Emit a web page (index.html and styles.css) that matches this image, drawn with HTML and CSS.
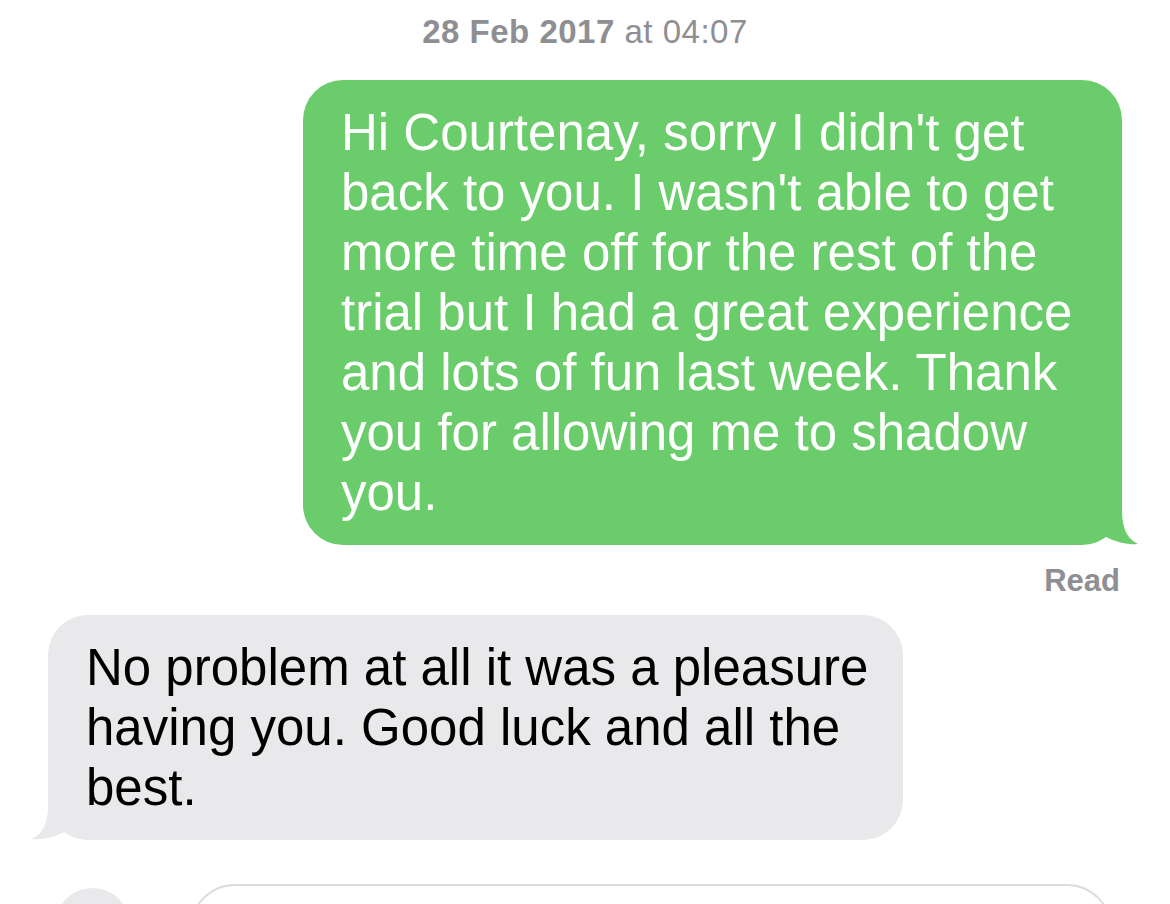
FILE: index.html
```html
<!DOCTYPE html>
<html lang="en">
<head>
    <meta charset="UTF-8">
    <meta name="viewport" content="width=device-width, initial-scale=1.0">
    <title>Messages</title>
    <link rel="stylesheet" href="styles.css">
</head>
<body>
    <div class="date"><span class="day">28 Feb 2017</span> at 04:07</div>
    <div class="thread">
        <div class="bubble sent">
            Hi Courtenay, sorry I didn't get<br>
            back to you. I wasn't able to get<br>
            more time off for the rest of the<br>
            trial but I had a great experience<br>
            and lots of fun last week. Thank<br>
            you for allowing me to shadow<br>
            you.
            <svg class="tail" viewBox="0 0 48 45" width="48" height="45">
                <path d="M0 0 H30 V10 C30 28 35 39 46 44 C38 45 26 43 14 37 Z"/>
            </svg>
        </div>
        <div class="read">Read</div>
        <div class="bubble received">
            No problem at all it was a pleasure<br>
            having you. Good luck and all the<br>
            best.
            <svg class="tail" viewBox="0 0 48 45" width="48" height="45">
                <path d="M0 0 H30 V10 C30 28 35 39 46 44 C38 45 26 43 14 37 Z"/>
            </svg>
        </div>
    </div>
    <div class="composer">
        <div class="apps"></div>
        <div class="input"></div>
    </div>
</body>
</html>
```

FILE: styles.css
```css
html, body {
    height: 904px;
    overflow: hidden;
}
body {
    margin: 0;
    background-color: #fff;
    font-family: "Liberation Sans", Arial, sans-serif;
}
.date {
    padding-top: 12px;
    text-align: center;
    font-size: 33px;
    line-height: 40px;
    letter-spacing: 0.5px;
    color: #8e8e93;
}
.date .day {
    font-weight: bold;
}
.thread {
    display: flex;
    flex-direction: column;
}
.bubble {
    position: relative;
    box-sizing: border-box;
    border-radius: 40px;
    font-size: 51px;
    line-height: 60px;
    white-space: nowrap;
}
.bubble.sent {
    align-self: flex-end;
    width: 819px;
    margin-top: 28px;
    margin-right: 48px;
    padding: 23px 51px 22px 38px;
    background-color: #6acc6a;
    color: #fff;
}
.bubble.received {
    align-self: flex-start;
    width: 855px;
    margin-top: 16px;
    margin-left: 48px;
    padding: 23px 40px 22px 38px;
    background-color: #e9e9eb;
    color: #000;
}
.tail {
    position: absolute;
    bottom: 0;
}
.sent .tail {
    right: -18px;
    fill: #6acc6a;
}
.received .tail {
    left: -18px;
    transform: scaleX(-1);
    fill: #e9e9eb;
}
.read {
    align-self: flex-end;
    margin-top: 18px;
    margin-right: 50px;
    font-size: 31px;
    font-weight: bold;
    line-height: 36px;
    color: #8e8e93;
}
.composer {
    display: flex;
    align-items: flex-start;
    height: 20px;
    margin-top: 44px;
    padding-left: 55px;
    overflow: hidden;
}
.apps {
    width: 75px;
    height: 75px;
    margin-top: 4px;
    border-radius: 50%;
    background-color: #e9e9eb;
}
.input {
    box-sizing: border-box;
    width: 922px;
    height: 90px;
    margin-left: 60px;
    border: 2px solid #dcdcdc;
    border-radius: 50px;
}
```
